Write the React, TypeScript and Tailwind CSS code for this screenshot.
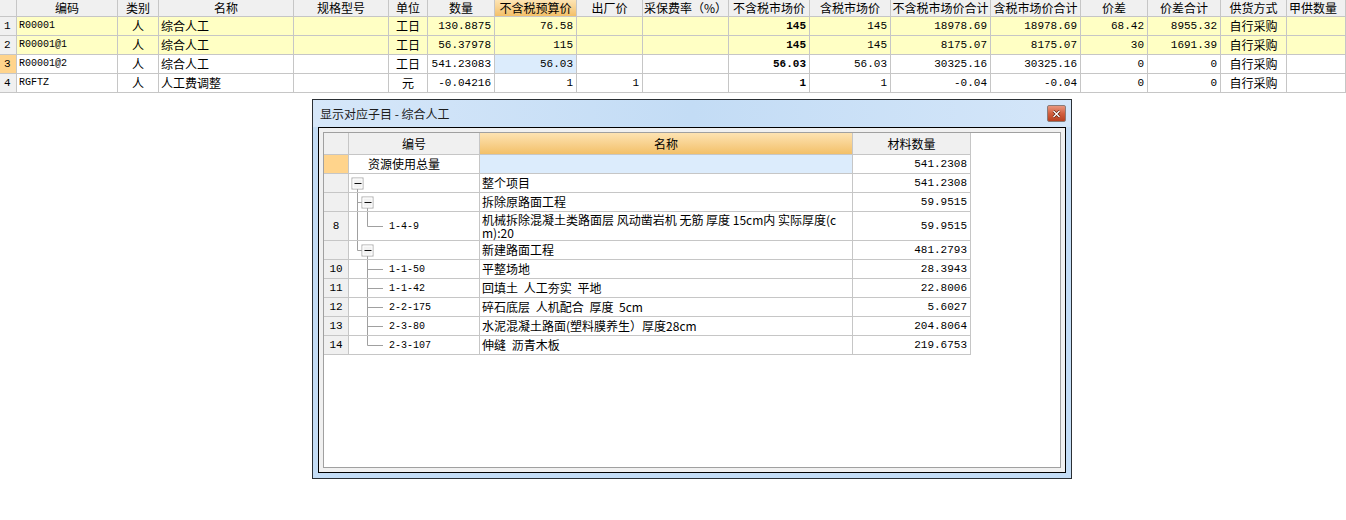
import React from "react";

type Align = "rownum" | "code" | "center" | "left" | "num" | "bold";

const topCols: { w: string; h: string; a: Align }[] = [
  { w: "w-[17px]", h: "", a: "rownum" },
  { w: "w-[101px]", h: "编码", a: "code" },
  { w: "w-[41px]", h: "类别", a: "center" },
  { w: "w-[135px]", h: "名称", a: "left" },
  { w: "w-[95px]", h: "规格型号", a: "left" },
  { w: "w-[39px]", h: "单位", a: "center" },
  { w: "w-[67px]", h: "数量", a: "num" },
  { w: "w-[82px]", h: "不含税预算价", a: "num" },
  { w: "w-[66px]", h: "出厂价", a: "num" },
  { w: "w-[86px]", h: "采保费率（%）", a: "num" },
  { w: "w-[81px]", h: "不含税市场价", a: "bold" },
  { w: "w-[81px]", h: "含税市场价", a: "num" },
  { w: "w-[100px]", h: "不含税市场价合计", a: "num" },
  { w: "w-[90px]", h: "含税市场价合计", a: "num" },
  { w: "w-[67px]", h: "价差", a: "num" },
  { w: "w-[73px]", h: "价差合计", a: "num" },
  { w: "w-[66px]", h: "供货方式", a: "center" },
  { w: "flex-1", h: "甲供数量", a: "left" },
];

const topRows = [
  { y: true, v: ["1", "R00001", "人", "综合人工", "", "工日", "130.8875", "76.58", "", "", "145", "145", "18978.69", "18978.69", "68.42", "8955.32", "自行采购", ""] },
  { y: true, v: ["2", "R00001@1", "人", "综合人工", "", "工日", "56.37978", "115", "", "", "145", "145", "8175.07", "8175.07", "30", "1691.39", "自行采购", ""] },
  { y: false, sel: true, v: ["3", "R00001@2", "人", "综合人工", "", "工日", "541.23083", "56.03", "", "", "56.03", "56.03", "30325.16", "30325.16", "0", "0", "自行采购", ""] },
  { y: false, v: ["4", "RGFTZ", "人", "人工费调整", "", "元", "-0.04216", "1", "1", "", "1", "1", "-0.04", "-0.04", "0", "0", "自行采购", ""] },
];

const alignCls: Record<Align, string> = {
  rownum: "pl-[4px] font-['Liberation_Mono',monospace] text-[11px]",
  code: "pl-[2px] font-['Liberation_Mono',monospace] text-[10px]",
  center: "text-center",
  left: "pl-[2px]",
  num: "text-right pr-[3px] font-['Liberation_Mono',monospace] text-[11px]",
  bold: "text-right pr-[3px] font-['Liberation_Mono',monospace] text-[11px] font-bold",
};

function TopTable() {
  return (
    <div className="flex w-full flex-col">
      <div className="flex h-[17px]">
        {topCols.map((c, i) => (
          <div
            key={i}
            className={`${c.w} shrink-0 overflow-hidden whitespace-nowrap border-b border-r border-[#c6c6c6] leading-[16px] ${
              i === 7 ? "bg-gradient-to-b from-[#fde4b4] to-[#f3c068]" : "bg-[#f0f0f0]"
            } ${i === 17 ? "pl-[2px]" : "text-center"}`}
          >
            {c.h}
          </div>
        ))}
      </div>
      {topRows.map((r, ri) => (
        <div key={ri} className="flex h-[19px]">
          {topCols.map((c, i) => {
            let bg = r.y ? "bg-[#ffffc4]" : "bg-white";
            if (i === 0) bg = r.sel ? "bg-[#ffd48c]" : "bg-[#f0f0f0]";
            if (r.sel && i === 7) bg = "bg-[#dcecfc]";
            return (
              <div
                key={i}
                className={`${c.w} shrink-0 overflow-hidden whitespace-nowrap border-b border-r border-[#c6c6c6] leading-[18px] ${bg} ${alignCls[c.a]}`}
              >
                {r.v[i]}
              </div>
            );
          })}
        </div>
      ))}
    </div>
  );
}

type Tree = "none" | "root" | "branchMid" | "leafUnderMid" | "branchLast" | "leaf" | "leafLast";

const LINE = "#a0a0a0";

function Box({ cx, cy }: { cx: number; cy: number }) {
  return (
    <g>
      <rect x={cx - 5.5} y={cy - 5.5} width={11} height={11} fill="#f2f2f2" stroke="#a9a9a9" />
      <rect x={cx - 4.5} y={cy - 4.5} width={9} height={9} fill="none" stroke="#ffffff" />
      <line x1={cx - 3} y1={cy} x2={cx + 4} y2={cy} stroke="#111" />
    </g>
  );
}

function TreeLines({ t, h }: { t: Tree; h: number }) {
  const cy = Math.floor(h / 2) + 0.5;
  const l1 = 8.5;
  const l2 = 18.5;
  return (
    <svg width={40} height={h} className="absolute left-0 top-0">
      {t === "root" && (
        <>
          <line x1={l1} y1={cy + 5} x2={l1} y2={h} stroke={LINE} />
          <Box cx={l1} cy={cy} />
        </>
      )}
      {t === "branchMid" && (
        <>
          <line x1={l1} y1={0} x2={l1} y2={h} stroke={LINE} />
          <line x1={l1} y1={cy} x2={l2 - 5} y2={cy} stroke={LINE} />
          <line x1={l2} y1={cy + 5} x2={l2} y2={h} stroke={LINE} />
          <Box cx={l2} cy={cy} />
        </>
      )}
      {t === "leafUnderMid" && (
        <>
          <line x1={l1} y1={0} x2={l1} y2={h} stroke={LINE} />
          <line x1={l2} y1={0} x2={l2} y2={cy} stroke={LINE} />
          <line x1={l2} y1={cy} x2={34} y2={cy} stroke={LINE} />
        </>
      )}
      {t === "branchLast" && (
        <>
          <line x1={l1} y1={0} x2={l1} y2={cy} stroke={LINE} />
          <line x1={l1} y1={cy} x2={l2 - 5} y2={cy} stroke={LINE} />
          <line x1={l2} y1={cy + 5} x2={l2} y2={h} stroke={LINE} />
          <Box cx={l2} cy={cy} />
        </>
      )}
      {t === "leaf" && (
        <>
          <line x1={l2} y1={0} x2={l2} y2={h} stroke={LINE} />
          <line x1={l2} y1={cy} x2={34} y2={cy} stroke={LINE} />
        </>
      )}
      {t === "leafLast" && (
        <>
          <line x1={l2} y1={0} x2={l2} y2={cy} stroke={LINE} />
          <line x1={l2} y1={cy} x2={34} y2={cy} stroke={LINE} />
        </>
      )}
    </svg>
  );
}

const subRows: { n: string; t: Tree; code: string; name: string | string[]; qty: string; total?: boolean }[] = [
  { n: "", t: "none", code: "资源使用总量", name: "", qty: "541.2308", total: true },
  { n: "", t: "root", code: "", name: "整个项目", qty: "541.2308" },
  { n: "", t: "branchMid", code: "", name: "拆除原路面工程", qty: "59.9515" },
  {
    n: "8",
    t: "leafUnderMid",
    code: "1-4-9",
    name: ["机械拆除混凝土类路面层 风动凿岩机 无筋 厚度 15cm内 实际厚度(c", "m):20"],
    qty: "59.9515",
  },
  { n: "", t: "branchLast", code: "", name: "新建路面工程", qty: "481.2793" },
  { n: "10", t: "leaf", code: "1-1-50", name: "平整场地", qty: "28.3943" },
  { n: "11", t: "leaf", code: "1-1-42", name: "回填土 人工夯实 平地", qty: "22.8006" },
  { n: "12", t: "leaf", code: "2-2-175", name: "碎石底层 人机配合 厚度 5cm", qty: "5.6027" },
  { n: "13", t: "leaf", code: "2-3-80", name: "水泥混凝土路面(塑料膜养生）厚度28cm", qty: "204.8064" },
  { n: "14", t: "leafLast", code: "2-3-107", name: "伸缝 沥青木板", qty: "219.6753" },
];

function SubTable() {
  return (
    <div className="flex w-[647px] flex-col">
      <div className="flex h-[22px]">
        <div className="w-[25px] shrink-0 border-b border-r border-[#c6c6c6] bg-[#f0f0f0]" />
        <div className="w-[131px] shrink-0 border-b border-r border-[#c6c6c6] bg-[#f0f0f0] text-center leading-[21px]">编号</div>
        <div className="w-[373px] shrink-0 border-b border-r border-[#c6c6c6] bg-gradient-to-b from-[#fde3b2] to-[#f3c068] text-center leading-[21px]">名称</div>
        <div className="w-[118px] shrink-0 border-b border-r border-[#c6c6c6] bg-[#f0f0f0] text-center leading-[21px]">材料数量</div>
      </div>
      {subRows.map((r, i) => {
        const tall = Array.isArray(r.name);
        const h = tall ? 28 : 18;
        return (
          <div key={i} className={`flex ${tall ? "h-[29px]" : "h-[19px]"}`}>
            <div
              className={`flex w-[25px] shrink-0 items-center justify-center border-b border-r border-[#c6c6c6] font-['Liberation_Mono',monospace] text-[11px] ${
                r.total ? "bg-[#ffd48c]" : "bg-[#f0f0f0]"
              }`}
            >
              {r.n}
            </div>
            <div className="relative flex w-[131px] shrink-0 items-center border-b border-r border-[#c6c6c6] bg-white">
              {r.t !== "none" && <TreeLines t={r.t} h={h} />}
              {r.total ? (
                <span className="pl-[19px]">{r.code}</span>
              ) : (
                <span className="pl-[40px] font-['Liberation_Mono',monospace] text-[10px]">{r.code}</span>
              )}
            </div>
            {tall ? (
              <div className="flex w-[373px] shrink-0 flex-col justify-center whitespace-nowrap border-b border-r border-[#c6c6c6] bg-white pl-[2px] leading-[13px]">
                {(r.name as string[]).map((line, k) => (
                  <div key={k}>{line}</div>
                ))}
              </div>
            ) : (
              <div
                className={`flex w-[373px] shrink-0 items-center overflow-hidden whitespace-nowrap border-b border-r border-[#c6c6c6] pl-[2px] leading-[18px] [word-spacing:3px] ${
                  r.total ? "bg-[#dcecfc]" : "bg-white"
                }`}
              >
                <span>{r.name}</span>
              </div>
            )}
            <div className="flex w-[118px] shrink-0 items-center justify-end border-b border-r border-[#c6c6c6] bg-white pr-[3px] font-['Liberation_Mono',monospace] text-[11px]">
              {r.qty}
            </div>
          </div>
        );
      })}
    </div>
  );
}

function CloseButton() {
  return (
    <div className="flex h-[17px] w-[19px] items-center justify-center rounded-[2px] border border-[#8a7b78] bg-gradient-to-b from-[#e8967e] via-[#d2603f] to-[#b8401f]">
      <svg width="9" height="8" viewBox="0 0 9 8">
        <path d="M1.5 1 L7.5 7 M7.5 1 L1.5 7" stroke="#5a1a0a" strokeWidth="2.6" />
        <path d="M1.5 1 L7.5 7 M7.5 1 L1.5 7" stroke="#ffffff" strokeWidth="1.4" />
      </svg>
    </div>
  );
}

export default function App() {
  return (
    <div className="relative h-[520px] w-[1346px] overflow-hidden bg-white font-['Noto_Sans_CJK_SC',sans-serif] text-[12px] text-black">
      <TopTable />

      <div className="absolute left-[312px] top-[99px] flex h-[380px] w-[760px] flex-col border border-[#2b3035] bg-[#c4ddf6]">
        <div className="flex h-[27px] shrink-0 items-center justify-between bg-gradient-to-r from-[#d6e7f9] via-[#c3dcf5] to-[#d4e6f9] pl-[7px] pr-[5px]">
          <span className="text-[12px] text-[#1c1c1c]">显示对应子目 - 综合人工</span>
          <CloseButton />
        </div>
        <div className="mx-[5px] mb-[5px] flex flex-1 flex-col border border-black bg-[#f0f0f0] p-[4px]">
          <div className="flex-1 border border-[#a0a0a0] bg-white">
            <SubTable />
          </div>
        </div>
      </div>
    </div>
  );
}
